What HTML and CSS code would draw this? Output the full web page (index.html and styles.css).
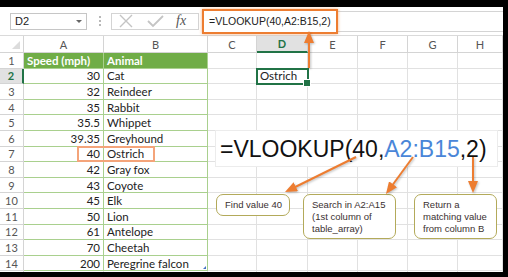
FILE: index.html
```html
<!DOCTYPE html>
<html>
<head>
  <title>VLOOKUP example</title>
  <link rel="stylesheet" href="styles.css">
</head>
<body>

  <div class="frame">

    <div class="fbar">
      <div class="namebox">D2<span class="drop"></span></div>
      <div class="dots"><i></i><i></i><i></i></div>
      <div class="fxbtns">
        <svg width="16" height="14" viewBox="0 0 16 14"><path d="M2 1 L14 13 M14 1 L2 13" stroke="#c4c4c4" stroke-width="1.4" fill="none"/></svg>
        <svg width="17" height="14" viewBox="0 0 17 14"><path d="M1 7 L6 12 L16 2" stroke="#c4c4c4" stroke-width="1.8" fill="none"/></svg>
        <span class="fx">fx</span>
      </div>
      <div class="finput">
        <div class="fcode">=VLOOKUP(40,A2:B15,2)</div>
      </div>
    </div>

    <div class="sheet">
      <div class="corner"><i></i></div>
      <div class="ch">A</div><div class="ch">B</div><div class="ch">C</div><div class="ch on">D</div>
      <div class="ch">E</div><div class="ch">F</div><div class="ch">G</div><div class="ch">H</div>

      <div class="rh">1</div><div class="t th">Speed (mph)</div><div class="t th">Animal</div>
      <div></div><div></div><div></div><div></div><div></div><div></div>

      <div class="rh on">2</div><div class="t n">30</div><div class="t">Cat</div>
      <div></div><div class="sel">Ostrich</div><div></div><div></div><div></div><div></div>

      <div class="rh">3</div><div class="t n">32</div><div class="t">Reindeer</div>
      <div></div><div></div><div></div><div></div><div></div><div></div>

      <div class="rh">4</div><div class="t n">35</div><div class="t">Rabbit</div>
      <div></div><div></div><div></div><div></div><div></div><div></div>

      <div class="rh">5</div><div class="t n">35.5</div><div class="t">Whippet</div>
      <div></div><div></div><div></div><div></div><div></div><div></div>

      <div class="rh">6</div><div class="t n">39.35</div><div class="t">Greyhound</div>
      <div></div><div></div><div></div><div></div><div></div><div></div>

      <div class="rh">7</div><div class="t n">40</div><div class="t">Ostrich</div>
      <div></div><div></div><div></div><div></div><div></div><div></div>

      <div class="rh">8</div><div class="t n">42</div><div class="t">Gray fox</div>
      <div></div><div></div><div></div><div></div><div></div><div></div>

      <div class="rh">9</div><div class="t n">43</div><div class="t">Coyote</div>
      <div></div><div></div><div></div><div></div><div></div><div></div>

      <div class="rh">10</div><div class="t n">45</div><div class="t">Elk</div>
      <div></div><div></div><div></div><div></div><div></div><div></div>

      <div class="rh">11</div><div class="t n">50</div><div class="t">Lion</div>
      <div></div><div></div><div></div><div></div><div></div><div></div>

      <div class="rh">12</div><div class="t n">61</div><div class="t">Antelope</div>
      <div></div><div></div><div></div><div></div><div></div><div></div>

      <div class="rh">13</div><div class="t n">70</div><div class="t">Cheetah</div>
      <div></div><div></div><div></div><div></div><div></div><div></div>

      <div class="rh">14</div><div class="t n">200</div><div class="t last">Peregrine falcon</div>
      <div></div><div></div><div></div><div></div><div></div><div></div>

      <div class="rh"></div><div></div><div></div>
      <div></div><div></div><div></div><div></div><div></div><div></div>
    </div>

    <!-- callouts over the sheet -->
    <div class="pick"></div>

    <div class="bigf">=VLOOKUP(40,<span class="rng">A2:B15</span>,2)</div>

    <div class="note n1">Find value 40</div>
    <div class="note n2">Search in A2:A15<br>(1st column of<br>table_array)</div>
    <div class="note n3">Return a<br>matching value<br>from column B</div>

    <svg class="arrows" width="503" height="265" viewBox="0 0 503 265">
      <defs>
        <marker id="head" markerUnits="userSpaceOnUse" markerWidth="12" markerHeight="10" viewBox="0 0 12 10" refX="4" refY="5" orient="auto">
          <path d="M0 0 L12 5 L0 10 z" fill="#ed7d31"/>
        </marker>
      </defs>
      <g stroke="#ed7d31" stroke-width="2" fill="none" marker-end="url(#head)">
        <line x1="356" y1="150" x2="292.2" y2="181.5"/>
        <line x1="413" y1="150" x2="390.7" y2="180.5"/>
        <line x1="473" y1="150" x2="473" y2="178"/>
        <line x1="309" y1="61" x2="309" y2="32"/>
      </g>
    </svg>

  </div>

</body>
</html>
```

FILE: styles.css
```css
* {
  box-sizing: border-box;
}

body {
  margin: 0;
  height: 277px;
  background-color: #000;
  overflow: hidden;
}

.frame {
  position: relative;
  width: 503px;
  height: 265px;
  margin-top: 7px;
  background-color: #fff;
  overflow: hidden;
  font-family: "Lato", "Liberation Sans", sans-serif;
}

/* formula bar */
.fbar {
  display: flex;
  align-items: center;
  height: 28px;
  padding-left: 10px;
  font-family: "Liberation Sans", Arial, sans-serif;
}

.namebox {
  display: flex;
  align-items: center;
  justify-content: space-between;
  width: 77px;
  height: 17px;
  padding: 0 4px;
  border: 1px solid #c6c6c6;
  font-size: 11px;
  color: #222;
}

.drop {
  width: 0;
  height: 0;
  border-left: 3px solid transparent;
  border-right: 3px solid transparent;
  border-top: 3px solid #666;
}

.dots {
  display: flex;
  flex-direction: column;
  gap: 2px;
  margin: 0 10px 0 12px;
}

.dots i {
  width: 2px;
  height: 2px;
  background-color: #b8b8b8;
}

.fxbtns {
  display: flex;
  align-items: center;
  width: 88px;
  height: 17px;
  padding-left: 6px;
  border: 1px solid #d4d4d4;
}

.fxbtns svg:nth-child(2) {
  margin-left: 13px;
}

.fx {
  margin-left: 12px;
  font-family: "Liberation Serif", serif;
  font-style: italic;
  font-size: 14px;
  color: #555;
}

.finput {
  display: flex;
  align-items: center;
  flex: 1;
  height: 21px;
  margin-left: 3px;
  border: 1px solid #d4d4d4;
  border-right: none;
}

.fcode {
  display: flex;
  align-items: center;
  height: 25px;
  margin-left: -1px;
  padding: 0 5px;
  border: 2px solid #ed7d31;
  box-shadow: 0 0 3px rgba(237, 125, 49, 0.6);
  background-color: #fff;
  font-size: 10.5px;
  color: #222;
}

/* sheet */
.sheet {
  display: grid;
  grid-template-columns: 24px 80px 104px 49px 51px 50px 50px 50px 45px;
  grid-template-rows: 17px repeat(15, 15.6px);
  border-top: 1px solid #dadada;
}

.sheet > div {
  display: flex;
  align-items: center;
  padding: 0 3px;
  border-right: 1px solid #e1e1e1;
  border-bottom: 1px solid #e1e1e1;
  font-size: 11.5px;
  color: #222;
  white-space: nowrap;
}

.sheet > .corner {
  justify-content: flex-end;
  align-items: flex-end;
  padding: 3px;
  border-color: #d4d4d4;
}

.corner i {
  width: 0;
  height: 0;
  border-left: 8px solid transparent;
  border-bottom: 8px solid #dcdcdc;
}

.sheet > .ch {
  justify-content: center;
  border-color: #d4d4d4;
  font-size: 11px;
  color: #555;
}

.sheet > .ch.on {
  background-color: #e1e1e1;
  border-bottom: 2px solid #217346;
  color: #217346;
  font-weight: bold;
}

.sheet > .rh {
  justify-content: center;
  border-color: #d4d4d4;
  font-size: 11px;
  color: #555;
}

.sheet > .rh.on {
  background-color: #e1e1e1;
  border-right: 2px solid #217346;
  color: #217346;
  font-weight: bold;
}

.sheet > .t {
  border-right-color: #a9d08e;
  border-bottom-color: #a9d08e;
}

.sheet > .th {
  background-color: #70ad47;
  color: #fff;
  font-weight: bold;
}

.sheet > .n {
  justify-content: flex-end;
}

.sheet > .last {
  position: relative;
}

.sheet > .last::after {
  content: "";
  position: absolute;
  right: 1px;
  bottom: 1px;
  width: 0;
  height: 0;
  border-left: 3px solid transparent;
  border-bottom: 3px solid #4472c4;
}

.sheet > .sel {
  position: relative;
  outline: 2px solid #217346;
  outline-offset: -1px;
}

.sel::after {
  content: "";
  position: absolute;
  right: -4px;
  bottom: -4px;
  width: 6px;
  height: 6px;
  background-color: #217346;
  border: 1px solid #fff;
}

/* overlays */
.pick {
  position: absolute;
  left: 77px;
  top: 139px;
  width: 78px;
  height: 16px;
  border: 2px solid #f4a47a;
}

.bigf {
  position: absolute;
  left: 215px;
  top: 123px;
  width: 283px;
  height: 37px;
  padding-left: 4px;
  background-color: #fff;
  border: 1px solid #ececec;
  font-family: "Liberation Sans", Arial, sans-serif;
  font-size: 23px;
  line-height: 36px;
  color: #111;
  white-space: nowrap;
}

.rng {
  color: #4a86d8;
}

.note {
  position: absolute;
  top: 187px;
  padding: 4px 6px 0 8px;
  background-color: #fff;
  border: 1.5px solid #b3aa5a;
  border-radius: 7px;
  font-family: "Liberation Sans", Arial, sans-serif;
  font-size: 9.5px;
  line-height: 12px;
  color: #3a3030;
  white-space: nowrap;
}

.n1 {
  left: 216px;
  width: 74px;
  height: 22px;
  padding-top: 4px;
}

.n2 {
  left: 303px;
  width: 93px;
  height: 45px;
}

.n3 {
  left: 414px;
  width: 83px;
  height: 45px;
}

.arrows {
  position: absolute;
  left: 0;
  top: 0;
  filter: drop-shadow(1px 1px 1px rgba(0, 0, 0, 0.25));
}
```
